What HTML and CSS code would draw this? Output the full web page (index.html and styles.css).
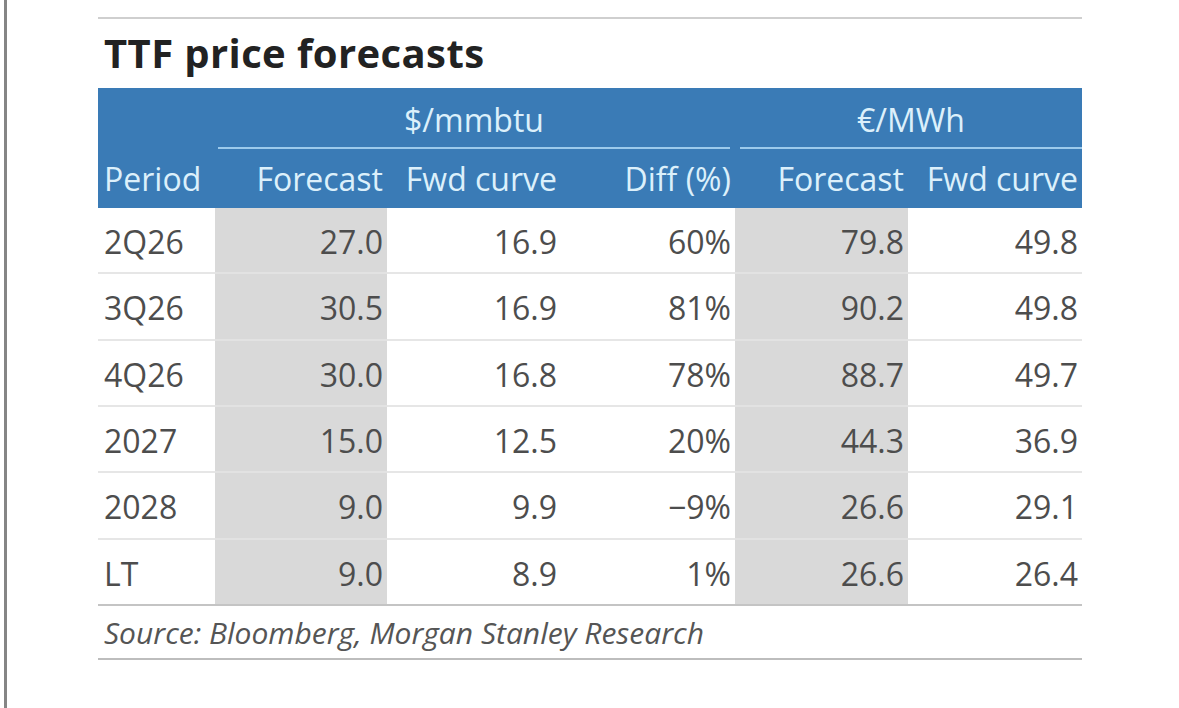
FILE: index.html
```html
<!DOCTYPE html>
<html lang="en">
<head>
<meta charset="utf-8">
<title>TTF price forecasts</title>
<link rel="stylesheet" href="styles.css">
</head>
<body>
<div class="page">
  <div class="left-rule"></div>
  <div class="sheet">
    <div class="top-line"></div>
    <h1 class="title">TTF price forecasts</h1>
    <div class="head">
      <div class="hcell"></div>
      <div class="hgroup span3"><span class="glabel">$/mmbtu</span></div>
      <div class="hgroup span2 group-eur"><span class="glabel">€/MWh</span></div>
      <div class="hcell left">Period</div>
      <div class="hcell">Forecast</div>
      <div class="hcell">Fwd curve</div>
      <div class="hcell">Diff (%)</div>
      <div class="hcell">Forecast</div>
      <div class="hcell">Fwd curve</div>
    </div>
    <div class="body">
      <div class="cell left">2Q26</div><div class="cell shade">27.0</div><div class="cell">16.9</div><div class="cell">60%</div><div class="cell shade">79.8</div><div class="cell">49.8</div>
      <div class="cell left">3Q26</div><div class="cell shade">30.5</div><div class="cell">16.9</div><div class="cell">81%</div><div class="cell shade">90.2</div><div class="cell">49.8</div>
      <div class="cell left">4Q26</div><div class="cell shade">30.0</div><div class="cell">16.8</div><div class="cell">78%</div><div class="cell shade">88.7</div><div class="cell">49.7</div>
      <div class="cell left">2027</div><div class="cell shade">15.0</div><div class="cell">12.5</div><div class="cell">20%</div><div class="cell shade">44.3</div><div class="cell">36.9</div>
      <div class="cell left">2028</div><div class="cell shade">9.0</div><div class="cell">9.9</div><div class="cell">−9%</div><div class="cell shade">26.6</div><div class="cell">29.1</div>
      <div class="cell left last">LT</div><div class="cell shade last">9.0</div><div class="cell last">8.9</div><div class="cell last">1%</div><div class="cell shade last">26.6</div><div class="cell last">26.4</div>
    </div>
    <div class="source">Source: Bloomberg, Morgan Stanley Research</div>
  </div>
</div>
</body>
</html>
```
FILE: styles.css
```css
html, body {
  margin: 0;
  padding: 0;
  background: #ffffff;
}

body {
  font-family: "Open Sans", "Noto Sans", sans-serif;
  color: #4d4d4d;
}

.page {
  display: flex;
  height: 708px;
  overflow: hidden;
}

.left-rule {
  width: 3px;
  margin-left: 4px;
  background: #858585;
  flex: none;
}

.sheet {
  margin-left: 91px;
  width: 984px;
  padding-top: 17px;
}

.top-line {
  height: 2px;
  background: #cfcfcf;
}

.title {
  margin: 10px 0 0 6px;
  font-size: 40px;
  line-height: 48px;
  height: 48px;
  font-weight: 700;
  color: #222222;
  letter-spacing: 0.4px;
}

.head {
  margin-top: 11px;
  background: #3a7bb6;
  display: grid;
  grid-template-columns: 117px 172px 174px 174px 173px 174px;
  grid-template-rows: 61px 59px;
  color: #dcf0fb;
  font-size: 32px;
}

.hgroup {
  display: flex;
  flex-direction: column;
  justify-content: flex-end;
  align-items: stretch;
}

.span3 {
  grid-column: 2 / span 3;
  padding: 0 5px 0 3px;
}

.span2 {
  grid-column: 5 / span 2;
  padding: 0 0 0 5px;
}

.glabel {
  display: block;
  text-align: center;
  height: 55px;
  line-height: 55px;
  border-bottom: 2px solid #9ccaec;
}

.hcell {
  text-align: right;
  padding-right: 4px;
  line-height: 59px;
  white-space: nowrap;
}

.hcell.left,
.cell.left {
  text-align: left;
  padding-left: 6px;
  padding-right: 0;
}

.body {
  display: grid;
  grid-template-columns: 117px 172px 174px 174px 173px 174px;
}

.cell {
  text-align: right;
  padding-right: 4px;
  padding-top: 3px;
  height: 61.33px;
  line-height: 61px;
  font-size: 32px;
  border-bottom: 2px solid #e6e6e6;
  white-space: nowrap;
}

.cell.shade {
  background: #d9d9d9;
  border-bottom-color: #e2e2e2;
}

.cell.last {
  border-bottom-color: #c4c4c4;
}

.source {
  padding: 2px 0 0 6px;
  height: 50px;
  line-height: 50px;
  font-size: 30px;
  font-style: italic;
  color: #555555;
  border-bottom: 2px solid #bdbdbd;
}
```
